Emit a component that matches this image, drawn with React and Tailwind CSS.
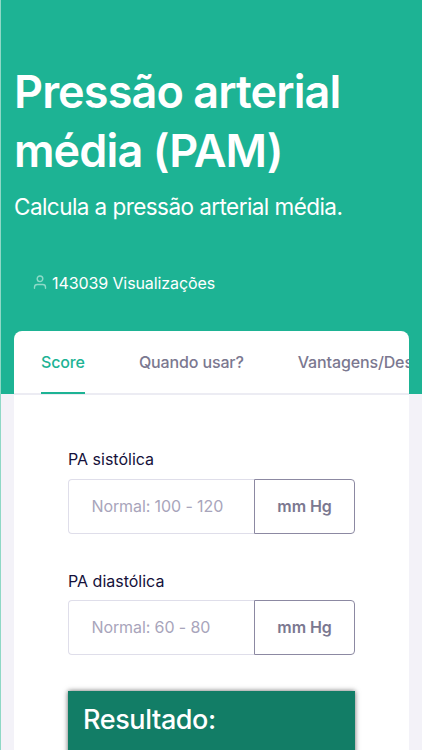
import React from 'react';

const fields = [
  { id: 'sistolica', label: 'PA sistólica', placeholder: 'Normal: 100 - 120', unit: 'mm Hg' },
  { id: 'diastolica', label: 'PA diastólica', placeholder: 'Normal: 60 - 80', unit: 'mm Hg' },
];

const UserIcon = () => (
  <svg className="w-[14px] h-[14px] -mt-[2px]" viewBox="0 0 14 14" fill="none" stroke="#8edac8" strokeWidth="1.4" strokeLinecap="round">
    <circle cx="7" cy="3.8" r="2.8" />
    <path d="M1.5 13.2v-1c0-1.7 1.1-2.7 2.8-2.7h5.4c1.7 0 2.8 1 2.8 2.7v1" />
  </svg>
);

const Field = ({ id, label, placeholder, unit }) => (
  <div className="mb-[35px]">
    <label htmlFor={id} className="block h-6 leading-6 mb-[7.7px] text-[16px] text-[#15113a]">{label}</label>
    <div className="flex h-[55px]">
      <input
        id={id}
        placeholder={placeholder}
        className="w-[186px] pl-[22.5px] pb-[1px] rounded-l-[4px] border border-r-0 border-[#dfdeea] text-[16px] tracking-[-0.1px] placeholder:text-[#a8a5bb] outline-none"
      />
      <span className="flex flex-1 items-center justify-center pb-[1px] rounded-r-[4px] border border-[#8c89a2] text-[16px] font-semibold tracking-[-0.1px] text-[#7b7890]">
        {unit}
      </span>
    </div>
  </div>
);

const App = () => {
  return (
    <div className="h-[750px] overflow-hidden border-l border-[#8ed8c6] bg-[#f3f2f8] font-['Inter',sans-serif]">
      <header className="h-[394px] bg-[#1db394] pt-[63px] pl-[13px] text-white">
        <h1 className="text-[45px] leading-[58.5px] font-semibold tracking-[-0.9px]">
          Pressão arterial
          <br />
          média (PAM)
        </h1>
        <p className="mt-[9px] text-[22.5px] leading-9 tracking-[-0.56px]">Calcula a pressão arterial média.</p>
        <div className="mt-[46px] ml-[19px] flex items-center gap-[5px] text-[16px] leading-6 tracking-[-0.1px]">
          <UserIcon />
          <span>143039 Visualizações</span>
        </div>
      </header>

      {/* Card overlapping the header */}
      <main className="relative -mt-[63px] ml-[13px] h-[460px] w-[395px] overflow-hidden rounded-t-[8px] bg-white">
        <nav className="flex h-[64px] gap-[54px] border-b-2 border-[#ececf3] pl-[27px] text-[16px] leading-[62px] font-medium tracking-[-0.13px] whitespace-nowrap text-[#7b7890]">
          <a className="h-[63px] border-b-2 border-[#1db394] text-[#1db394]">Score</a>
          <a>Quando usar?</a>
          <a>Vantagens/Desvantagens</a>
        </nav>
        <form className="w-[341px] pt-[52px] pl-[54px]">
          {fields.map((field) => (
            <Field key={field.id} {...field} />
          ))}
          <div className="mt-[36px] h-[120px] bg-[#127d66] pt-[10px] pl-[15px] text-[27px] leading-[38px] font-medium tracking-[-0.4px] text-white shadow-[0_0_5px_rgba(0,0,0,0.6)]">
            Resultado:
          </div>
        </form>
      </main>
    </div>
  );
};

export default App;
